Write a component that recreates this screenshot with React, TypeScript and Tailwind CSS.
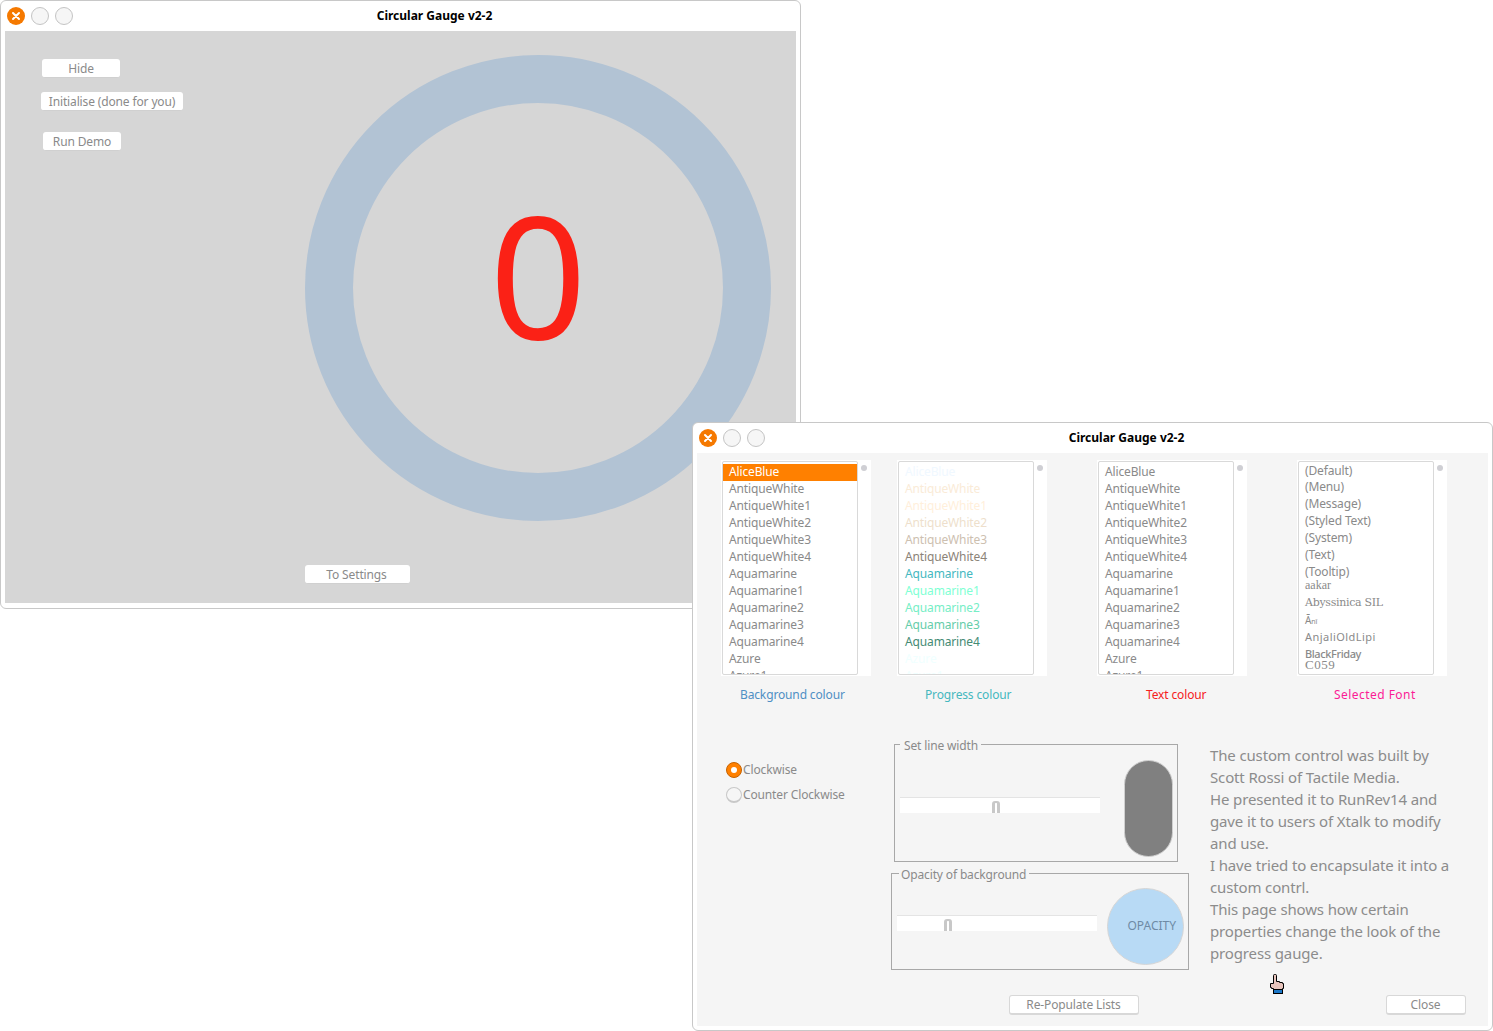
const colourNames = [
  'AliceBlue',
  'AntiqueWhite',
  'AntiqueWhite1',
  'AntiqueWhite2',
  'AntiqueWhite3',
  'AntiqueWhite4',
  'Aquamarine',
  'Aquamarine1',
  'Aquamarine2',
  'Aquamarine3',
  'Aquamarine4',
  'Azure',
  'Azure1',
];

const progressColours = [
  '#f0f8ff',
  '#faebd7',
  '#ffefdb',
  '#eedfcc',
  '#cdc0b0',
  '#8b8378',
  '#45b8bf',
  '#7fffd4',
  '#76eec6',
  '#66cdaa',
  '#458b74',
  '#f0ffff',
  '#f0ffff',
];

const TrafficLights = () => (
  <div className="flex items-center gap-[6px]">
    <div className="flex h-[18px] w-[18px] items-center justify-center rounded-full bg-[#f57900]">
      <svg width="10" height="10" viewBox="0 0 10 10">
        <path d="M2 2 L8 8 M8 2 L2 8" stroke="#fff" strokeWidth="2" strokeLinecap="round" />
      </svg>
    </div>
    <div className="h-[18px] w-[18px] rounded-full border border-[#c4c4c4] bg-[#f6f6f6]" />
    <div className="h-[18px] w-[18px] rounded-full border border-[#c4c4c4] bg-[#f6f6f6]" />
  </div>
);

const TitleBar = () => (
  <div className="relative flex h-[30px] items-center pl-[2px]">
    <TrafficLights />
    <div className="absolute inset-x-0 top-[7px] pl-[68px] text-center text-[12px] leading-[16px] font-bold tracking-normal text-black">
      Circular Gauge v2-2
    </div>
  </div>
);

const PushButton = ({ label, className }: { label: string; className: string }) => (
  <div
    className={`flex h-[19px] items-center justify-center rounded-[3px] border-b border-[#d0d0d0] bg-white pt-[1px] text-[12px] text-[#8a8a8a] ${className}`}
  >
    {label}
  </div>
);

const ListBox = ({ children }: { children: React.ReactNode }) => (
  <div className="flex h-[216px] w-[150px] bg-white p-[1px]">
    <div className="h-[214px] w-[136px] overflow-hidden rounded-[2px] border border-[#d9d9d9] bg-white">
      {children}
    </div>
    <div className="mt-[4px] ml-[3px] h-[6px] w-[6px] rounded-full bg-[#cfcfd4]" />
  </div>
);

const ColourRows = ({ colours, selected }: { colours?: string[]; selected?: boolean }) => (
  <div className="pt-[2px] text-[12px] text-[#8a8a8a]">
    {colourNames.map((name, i) => (
      <div
        key={name}
        className={`h-[17px] pl-[6px] leading-[15px] ${selected && i === 0 ? 'bg-[#ff8000] text-white' : ''}`}
        style={colours ? { color: colours[i] } : undefined}
      >
        {name}
      </div>
    ))}
  </div>
);

const FontRows = () => (
  <div className="pl-[6px] text-[#8a8a8a]">
    {['(Default)', '(Menu)', '(Message)', '(Styled Text)', '(System)', '(Text)', '(Tooltip)'].map((name, i) => (
      <div key={name} className={`text-[12px] leading-[17px] ${i === 0 ? 'h-[16px]' : 'h-[17px]'}`}>
        {name}
      </div>
    ))}
    <div className="-mt-[1px] h-[13px] font-['Liberation_Serif',serif] text-[12px] leading-[12px] tracking-normal">aakar</div>
    <div className="mt-[2px] h-[17px] font-['DejaVu_Serif',serif] text-[11px] leading-[17px] tracking-[-0.3px]">Abyssinica SIL</div>
    <div className="mt-[1px] h-[17px] text-[10px] leading-[17px]">
      Ā<span className="text-[7px]">nî</span>
    </div>
    <div className="-mt-[1px] h-[17px] text-[11px] leading-[17px] tracking-[0.45px]">AnjaliOldLipi</div>
    <div className="h-[17px] text-[11px] leading-[17px] font-medium tracking-[-0.4px]">BlackFriday</div>
    <div className="-mt-[4px] font-['Liberation_Serif',serif] text-[13px] leading-[14px] tracking-[0.5px]">C059</div>
  </div>
);

const Slider = ({ thumbAt, className }: { thumbAt: number; className: string }) => (
  <div className={`h-[16px] w-[200px] border-t border-[#e4e4e4] bg-white pt-[3px] ${className}`}>
    <svg width="8" height="12" viewBox="0 0 8 12" style={{ marginLeft: thumbAt }}>
      <path d="M0 12 V3 Q0 0 3 0 H5 Q8 0 8 3 V12 H5 V3 Q5 2 4.5 2 H3.5 Q3 2 3 3 V12 Z" fill="#c8c8c8" />
    </svg>
  </div>
);

const GroupBox = ({
  title,
  legendClass,
  className,
  children,
}: {
  title: string;
  legendClass: string;
  className: string;
  children: React.ReactNode;
}) => (
  <div className={`relative border border-[#a8a8a8] ${className}`}>
    <div className={`absolute -top-[8px] bg-[#f5f5f5] pr-[3px] text-[12px] leading-[17px] text-[#8a8a8a] ${legendClass}`}>
      {title}
    </div>
    {children}
  </div>
);

const Radio = ({ label, checked }: { label: string; checked?: boolean }) => (
  <div className="flex h-[25px] items-center text-[12px] text-[#8a8a8a]">
    {checked ? (
      <div className="flex h-[16px] w-[16px] items-center justify-center rounded-full border border-[#c66200] bg-[#ff8000]">
        <div className="h-[6px] w-[6px] rounded-full bg-white" />
      </div>
    ) : (
      <div className="h-[16px] w-[16px] rounded-full border border-b-2 border-[#c8c8c8] bg-[#f6f6f6]" />
    )}
    <span className="ml-[1px]">{label}</span>
  </div>
);

const HandCursor = () => (
  <svg width="15" height="21" viewBox="0 0 15 21" className="absolute top-[974px] left-[1270px]">
    <path
      d="M3.5 1.5 Q3.5 0.5 4.5 0.5 H5.5 Q6.5 0.5 6.5 1.5 V7.5 H9.5 V8.5 H12.5 V9.5 H13.5 V14.5 H12.5 V15.5 H3.5 V14.5 H1.5 V13.5 H0.5 V9.5 H3.5 Z"
      fill="#e8c4bc"
      stroke="#000"
      strokeWidth="1"
    />
    <rect x="3.5" y="15.5" width="9" height="4" fill="#1c78c8" stroke="#000" strokeWidth="1" />
  </svg>
);

const GaugeWindow = () => (
  <div className="absolute top-0 left-0 h-[609px] w-[801px] rounded-[6px] border border-[#c8c8c8] bg-white px-[4px]">
    <TitleBar />
    <div className="flex h-[572px] w-[791px] bg-[#d6d6d6]">
      <div className="w-[300px] pt-[28px] pl-[37px]">
        <PushButton label="Hide" className="w-[78px]" />
        <PushButton label="Initialise (done for you)" className="mt-[14px] -ml-[1px] w-[142px]" />
        <PushButton label="Run Demo" className="mt-[21px] ml-[1px] w-[78px]" />
      </div>
      <div className="pt-[24px]">
        <div className="relative h-[466px] w-[466px]">
          <svg width="466" height="466" viewBox="0 0 466 466">
            <circle cx="233" cy="233" r="209" fill="none" stroke="#b2c3d4" strokeWidth="48" />
          </svg>
          <div className="absolute inset-x-0 top-[104px] text-center text-[170px] leading-[228px] text-[#fb2116]">0</div>
        </div>
        <PushButton label="To Settings" className="mt-[44px] w-[105px] pr-[2px]" />
      </div>
    </div>
  </div>
);

const SettingsWindow = () => (
  <div className="absolute top-[422px] left-[692px] h-[609px] w-[801px] rounded-[6px] border border-[#c8c8c8] bg-white px-[4px]">
    <TitleBar />
    <div className="h-[573px] w-[791px] bg-[#f5f5f5] pt-[7px]">
      <div className="flex pl-[24px]">
        <div className="w-[176px]">
          <ListBox>
            <ColourRows selected />
          </ListBox>
          <div className="mt-[10px] ml-[19px] text-[12px] leading-[17px] text-[#4f8fc4]">Background colour</div>
        </div>
        <div className="w-[200px]">
          <ListBox>
            <ColourRows colours={progressColours} />
          </ListBox>
          <div className="mt-[10px] ml-[28px] text-[12px] leading-[17px] text-[#45b8bf]">Progress colour</div>
        </div>
        <div className="w-[200px]">
          <ListBox>
            <ColourRows />
          </ListBox>
          <div className="mt-[10px] ml-[49px] text-[12px] leading-[17px] text-[#f5201c]">Text colour</div>
        </div>
        <div className="w-[150px]">
          <ListBox>
            <FontRows />
          </ListBox>
          <div className="mt-[10px] ml-[37px] text-[12px] leading-[17px] tracking-[0.45px] text-[#fb1c96]">Selected Font</div>
        </div>
      </div>

      <div className="mt-[41px] flex">
        <div className="w-[194px] pt-[13px] pl-[29px]">
          <Radio label="Clockwise" checked />
          <Radio label="Counter Clockwise" />
        </div>
        <div className="w-[319px]">
          <GroupBox
            title="Set line width"
            legendClass="left-[5px] pl-[4px]"
            className="ml-[3px] flex h-[118px] w-[284px] items-start pl-[5px]"
          >
            <Slider thumbAt={92} className="mt-[52px]" />
            <div className="mt-[15px] ml-[24px] h-[97px] w-[49px] rounded-full border border-[#d0d0d0] bg-[#808080]" />
          </GroupBox>
          <GroupBox
            title="Opacity of background"
            legendClass="left-[7px] pl-[2px]"
            className="mt-[11px] flex h-[97px] w-[298px] items-start pl-[5px]"
          >
            <Slider thumbAt={47} className="mt-[41px]" />
            <div className="mt-[14px] ml-[10px] flex h-[77px] w-[77px] items-center justify-end rounded-full border border-[#d6d6d6] bg-[#b8daf5] pr-[7px] pb-[2px] text-[12px] tracking-normal text-[#6f8ba5]">
              OPACITY
            </div>
          </GroupBox>
        </div>
        <p className="w-[262px] text-[15px] leading-[22px] text-[#8c8c8c]">
          The custom control was built by
          <br />
          Scott Rossi of Tactile Media.
          <br />
          He presented it to RunRev14 and
          <br />
          gave it to users of Xtalk to modify
          <br />
          and use.
          <br />I have tried to encapsulate it into a
          <br />
          custom contrl.
          <br />
          This page shows how certain
          <br />
          properties change the look of the
          <br />
          progress gauge.
        </p>
      </div>

      <div className="mt-[25px] flex pl-[312px]">
        <div className="flex h-[20px] w-[130px] items-center justify-center rounded-[3px] border border-b-2 border-[#d8d8d8] bg-white pr-[1px] text-[12px] text-[#8a8a8a]">
          Re-Populate Lists
        </div>
        <div className="ml-[247px] flex h-[20px] w-[80px] items-center justify-center rounded-[3px] border border-b-2 border-[#d8d8d8] bg-white pr-[1px] text-[12px] text-[#8a8a8a]">
          Close
        </div>
      </div>
    </div>
  </div>
);

export default function App() {
  return (
    <div className="relative h-[1031px] w-[1493px] overflow-hidden bg-white font-['Noto_Sans',sans-serif] tracking-[-0.14px]">
      <GaugeWindow />
      <SettingsWindow />
      <HandCursor />
    </div>
  );
}
